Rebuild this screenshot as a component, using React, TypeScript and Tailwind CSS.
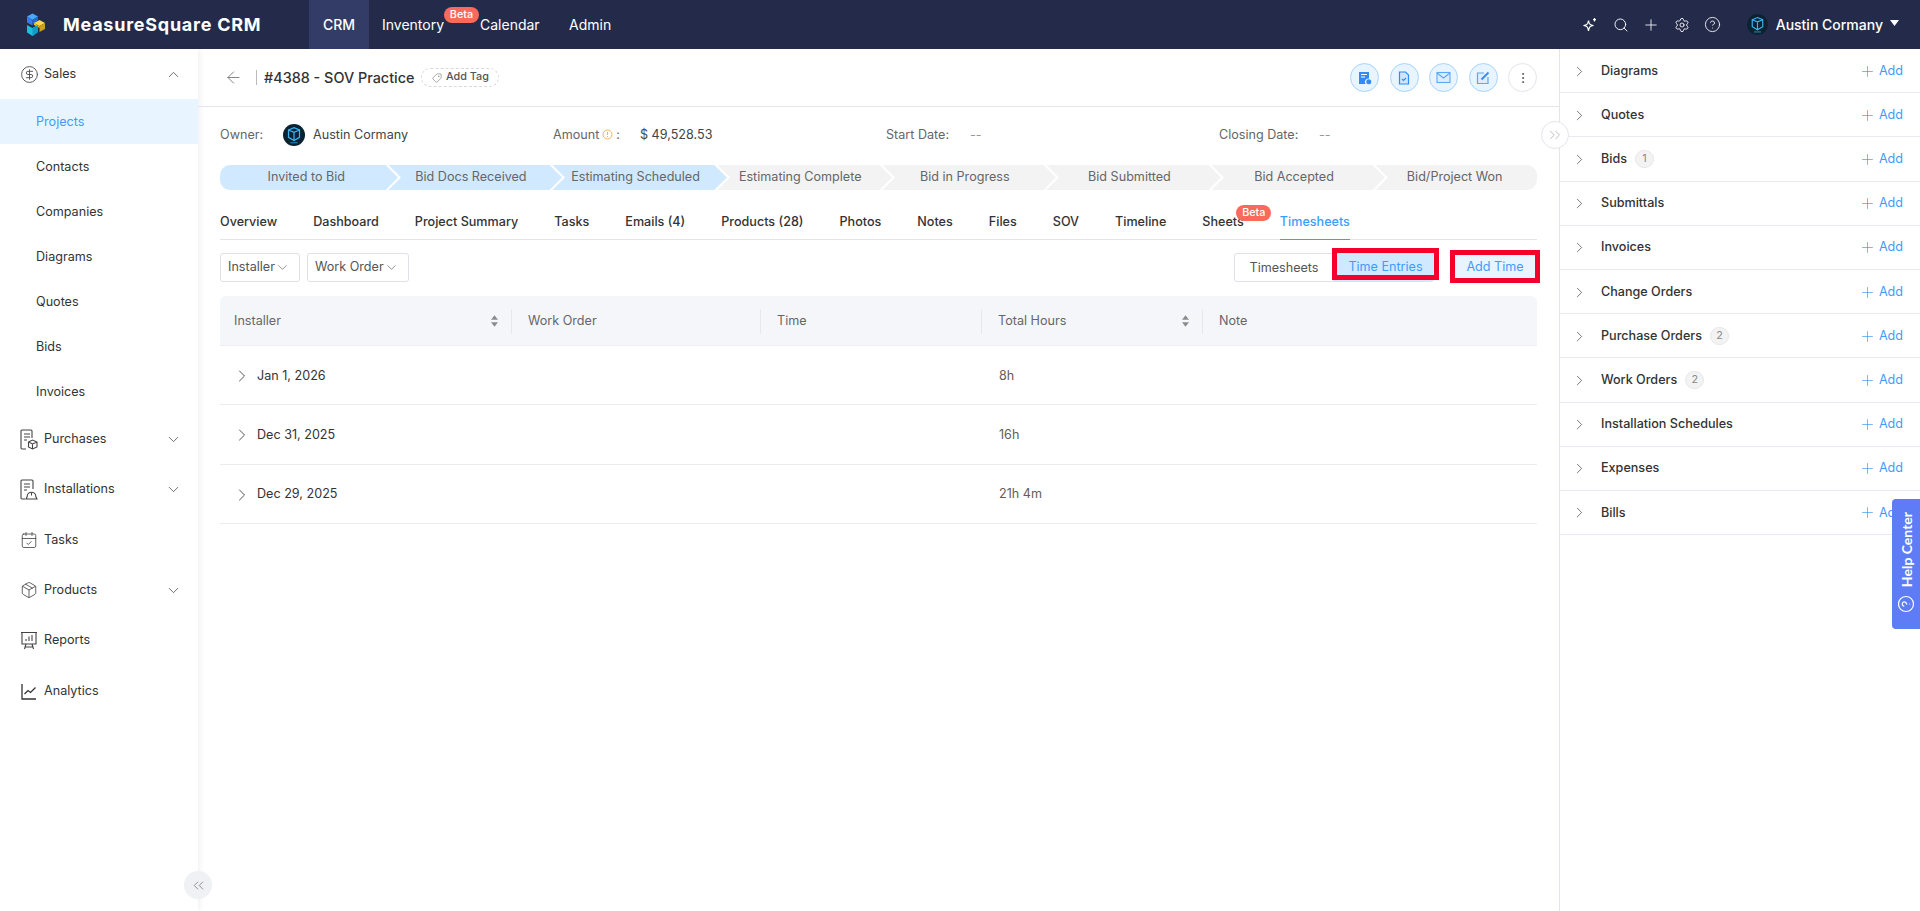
import {
  ArrowLeft,
  CalendarCheck,
  ChevronDown,
  ChevronRight,
  ChevronUp,
  ChevronsLeft,
  ChevronsRight,
  CircleDollarSign,
  CircleHelp,
  EllipsisVertical,
  Package,
  Plus,
  Search,
  Settings,
  Tag,
} from "lucide-react";

const subItems = ["Projects", "Contacts", "Companies", "Diagrams", "Quotes", "Bids", "Invoices"];
const stages = [
  "Invited to Bid",
  "Bid Docs Received",
  "Estimating Scheduled",
  "Estimating Complete",
  "Bid in Progress",
  "Bid Submitted",
  "Bid Accepted",
  "Bid/Project Won",
];
const tabs = [
  "Overview",
  "Dashboard",
  "Project Summary",
  "Tasks",
  "Emails (4)",
  "Products (28)",
  "Photos",
  "Notes",
  "Files",
  "SOV",
  "Timeline",
  "Sheets",
  "Timesheets",
];
const rows = [
  { date: "Jan 1, 2026", hours: "8h" },
  { date: "Dec 31, 2025", hours: "16h" },
  { date: "Dec 29, 2025", hours: "21h 4m" },
];
const panels: { name: string; count?: number }[] = [
  { name: "Diagrams" },
  { name: "Quotes" },
  { name: "Bids", count: 1 },
  { name: "Submittals" },
  { name: "Invoices" },
  { name: "Change Orders" },
  { name: "Purchase Orders", count: 2 },
  { name: "Work Orders", count: 2 },
  { name: "Installation Schedules" },
  { name: "Expenses" },
  { name: "Bills" },
];

function Logo() {
  return (
    <svg width="20" height="26" viewBox="0 0 20 26">
      <path d="M1 4.500 6.500 1.500 12 4.500 6.500 8Z" fill="#4aa8ff" />
      <path d="M1 4.500 6.500 8V13.500L1 10.500Z" fill="#2f7df0" />
      <path d="M6.500 8 12 4.500V8L6.500 13.500Z" fill="#2468d8" />
      <path d="M8 11 13.500 8 19 11 13.500 14Z" fill="#ffd94a" />
      <path d="M13.500 14 19 11V17L13.500 20Z" fill="#c9a020" />
      <path d="M8 11 13.500 14V16L8 13Z" fill="#f2bf1c" />
      <path d="M1 13 6.500 16 12 13V20L6.500 24 1 20.500Z" fill="#1bbde0" />
      <path d="M6.500 16 12 13V20L6.500 24Z" fill="#0f9cc4" />
    </svg>
  );
}

function Avatar({ size }: { size: number }) {
  return (
    <svg width={size} height={size} viewBox="0 0 24 24" className="shrink-0">
      <circle cx="12" cy="12" r="12" fill="#0b2233" />
      <path d="M6 6.500 12 4l6 2.500v8L12 18l-6-3.500Z" fill="none" stroke="#38b6f5" strokeWidth="1.3" />
      <path d="M6 6.500 12 9l6-2.500M12 9v9" fill="none" stroke="#38b6f5" strokeWidth="1.3" />
      <path d="M8 20.500h8" stroke="#38b6f5" strokeWidth="0.8" />
    </svg>
  );
}

function BetaBadge({ className }: { className: string }) {
  return (
    <span
      className={`absolute flex h-[16px] w-[35px] items-center justify-center rounded-full bg-[#f9695c] text-[10.800px] font-medium text-white ${className}`}
    >
      Beta
    </span>
  );
}

function PurchasesIcon() {
  return (
    <svg width="18" height="21" viewBox="0 0 18 21" fill="none" stroke="#444" strokeWidth="1.100">
      <path d="M6 20H2a1 1 0 0 1-1-1V2a1 1 0 0 1 1-1h9a1 1 0 0 1 1 1v7" />
      <path d="M4 5h6M4 8h6M4 11h3" />
      <path d="M8.500 13 12.500 11l4.500 2v5l-4.500 2-4-2ZM8.500 13l4 2 4.500-2M12.500 15v5" />
    </svg>
  );
}

function InstallationsIcon() {
  return (
    <svg width="18" height="21" viewBox="0 0 18 21" fill="none" stroke="#444" strokeWidth="1.100">
      <path d="M5 20H2a1 1 0 0 1-1-1V2a1 1 0 0 1 1-1h10a1 1 0 0 1 1 1v8" />
      <path d="M4 5h6M4 8h6M4 11h3" />
      <path d="M6 20h11l-1.200-2.500a4.300 4.300 0 0 0-8.600 0Z" />
      <path d="M11.500 13.500v3" />
    </svg>
  );
}

function ReportsIcon() {
  return (
    <svg width="18" height="20" viewBox="0 0 18 20" fill="none" stroke="#444" strokeWidth="1.100">
      <path d="M1 1.500h16M2 1.500v11.500h14V1.500" />
      <path d="M6 10V8M9 10V5.500M12 10V4" />
      <path d="M6 13l-1.500 5M12 13l1.500 5M4.500 16h9" />
    </svg>
  );
}

function AnalyticsIcon() {
  return (
    <svg width="16" height="17" viewBox="0 0 16 17" fill="none" stroke="#333" strokeWidth="1.300">
      <path d="M1 1v15h14" />
      <path d="m3.500 11 3.500-3.500 2.500 2L14.500 4.500" />
    </svg>
  );
}

function ActionButton({ children }: { children: React.ReactNode }) {
  return (
    <button className="flex h-[29px] w-[29px] items-center justify-center rounded-full border border-[#a6d4fb] bg-[#e8f4ff]">
      {children}
    </button>
  );
}

function SortIcon() {
  return (
    <svg width="7" height="12" viewBox="0 0 8 13" fill="#8c8c8c">
      <path d="M4 0 8 5H0Z" />
      <path d="M4 13 0 8h8Z" />
    </svg>
  );
}

function Header() {
  const iconBox = "flex w-[30.500px] justify-center";
  return (
    <header className="flex h-[49px] shrink-0 items-center bg-[#242b4a] text-white">
      <div className="ml-[26px] flex w-[283px] items-center">
        <Logo />
        <span className="ml-[17px] text-[18px] font-bold tracking-[0.75px]">MeasureSquare CRM</span>
      </div>
      <nav className="flex h-full items-center text-[14px]">
        <span className="flex h-full w-[60px] items-center justify-center bg-[#323c66] font-medium">CRM</span>
        <span className="relative ml-[13px] w-[98px]">
          Inventory
          <BetaBadge className="left-[62px] top-[-7px]" />
        </span>
        <span className="w-[89px]">Calendar</span>
        <span>Admin</span>
      </nav>
      <div className="ml-auto flex items-center pr-[21px]">
        <span className={iconBox}>
          <svg width="16" height="16" viewBox="0 0 16 16" fill="none" stroke="white" strokeWidth="1.200">
            <path d="M6.500 3.500C7 7 8 8 11.500 8.500 8 9 7 10 6.500 14 6 10 5 9 1.500 8.500 5 8 6 7 6.500 3.500Z" />
            <path d="M12.500 1v3.500M11 2.700h3" />
          </svg>
        </span>
        <span className={iconBox}>
          <Search size={16} strokeWidth={1.4} />
        </span>
        <span className={iconBox}>
          <Plus size={18} strokeWidth={1.1} />
        </span>
        <span className={iconBox}>
          <Settings size={16} strokeWidth={1.3} />
        </span>
        <span className={iconBox}>
          <CircleHelp size={17} strokeWidth={1.2} />
        </span>
        <span className="ml-[19px]">
          <Avatar size={21} />
        </span>
        <span className="ml-[8px] text-[14px] font-medium">Austin Cormany</span>
        <svg width="9" height="6" viewBox="0 0 9 6" fill="white" className="mb-[3px] ml-[7px]">
          <path d="M0 0h9L4.500 6Z" />
        </svg>
      </div>
    </header>
  );
}

function NavRow({ icon, label, arrow }: { icon: React.ReactNode; label: string; arrow?: boolean }) {
  return (
    <div className="flex h-[50.400px] items-center pl-[20px] pr-[16px]">
      <span className="flex w-[18px] justify-center">{icon}</span>
      <span className="ml-[6px] flex-1">{label}</span>
      {arrow && <ChevronDown size={17} strokeWidth={1} />}
    </div>
  );
}

function Sidebar() {
  return (
    <aside className="relative flex w-[198px] shrink-0 flex-col text-[12.600px] text-[#333] shadow-[2px_0_6px_rgba(0,0,0,0.06)]">
      <div className="flex h-[50px] items-center pl-[20px] pr-[16px]">
        <CircleDollarSign size={19} strokeWidth={1.1} className="text-[#444]" />
        <span className="ml-[5px] flex-1">Sales</span>
        <ChevronUp size={17} strokeWidth={1} />
      </div>
      {subItems.map((item, i) => (
        <div
          key={item}
          className={`flex h-[45px] items-center pl-[36px] pt-[1px] ${i === 0 ? "bg-[#e8f4ff] text-[#3f9cff]" : ""}`}
        >
          {item}
        </div>
      ))}
      <NavRow icon={<PurchasesIcon />} label="Purchases" arrow />
      <NavRow icon={<InstallationsIcon />} label="Installations" arrow />
      <NavRow icon={<CalendarCheck size={20} strokeWidth={1.1} className="text-[#444]" />} label="Tasks" />
      <NavRow icon={<Package size={20} strokeWidth={1.1} className="text-[#444]" />} label="Products" arrow />
      <NavRow icon={<ReportsIcon />} label="Reports" />
      <NavRow icon={<AnalyticsIcon />} label="Analytics" />
      <button className="absolute bottom-[12px] right-[-14px] z-20 flex h-[28px] w-[28px] items-center justify-center rounded-full bg-[#eff1f5] text-[#666]">
        <ChevronsLeft size={17} strokeWidth={1} />
      </button>
    </aside>
  );
}

function Stages() {
  return (
    <div className="mt-[19px] flex h-[25px] overflow-hidden rounded-[10px] text-[12.600px] text-[#666]">
      {stages.map((stage, i) => {
        const done = i < 3;
        const last = i === stages.length - 1;
        return (
          <div
            key={stage}
            className={`relative flex w-[164.625px] shrink-0 items-center justify-center ${last ? "" : "pl-[8px]"} ${done ? "bg-[#d1e9ff]" : "bg-[#f3f3f3]"}`}
          >
            {stage}
            {!last && (
              <svg width="17" height="25" viewBox="0 0 17 25" className="absolute left-full top-0 z-10">
                <path d="M0 0 13 12.500 0 25Z" fill={done ? "#d1e9ff" : "#f3f3f3"} />
                <path d="M1 -1 14.500 12.500 1 26" fill="none" stroke="white" strokeWidth="2" />
              </svg>
            )}
          </div>
        );
      })}
    </div>
  );
}

function TimeTable() {
  return (
    <div className="mt-[14px] text-[12.600px]">
      <div className="flex h-[50px] items-center rounded-t-[6px] border-b border-[#eceef2] bg-[#f5f6fa] pt-[1px] text-[#666]">
        <div className="flex h-[25px] w-[292px] items-center justify-between border-r border-[#e6e8ee] pl-[14px] pr-[13px]">
          Installer
          <SortIcon />
        </div>
        <div className="flex h-[25px] w-[249px] items-center border-r border-[#e6e8ee] pl-[16px]">Work Order</div>
        <div className="flex h-[25px] w-[221px] items-center border-r border-[#e6e8ee] pl-[16px]">Time</div>
        <div className="flex h-[25px] w-[221px] items-center justify-between border-r border-[#e6e8ee] pl-[16px] pr-[13px]">
          Total Hours
          <SortIcon />
        </div>
        <div className="pl-[16px]">Note</div>
      </div>
      {rows.map((row) => (
        <div key={row.date} className="flex h-[59.300px] items-center border-b border-[#ececec] pt-[2px] text-[#333]">
          <div className="flex w-[761px] items-center pl-[12px]">
            <ChevronRight size={20} strokeWidth={1} />
            <span className="ml-[5px]">{row.date}</span>
          </div>
          <div className="pl-[18px] text-[#665c54]">{row.hours}</div>
        </div>
      ))}
    </div>
  );
}

function Main() {
  return (
    <main className="relative flex min-w-0 flex-1 flex-col">
      <div className="flex h-[58px] shrink-0 items-center border-b border-[#e4e4ec] pl-[26px] pr-[22px]">
        <ArrowLeft size={19} strokeWidth={1} className="text-[#666]" />
        <span className="ml-[13px] h-[15px] w-px bg-[#bbb]" />
        <span className="ml-[7px] text-[14.400px] font-medium text-[#333]">#4388 - SOV Practice</span>
        <span className="ml-[7px] flex h-[19px] w-[78px] items-center justify-center gap-[4px] rounded-full border border-dashed border-[#d9d9d9] text-[10.800px] font-medium text-[#555]">
          <Tag size={10} strokeWidth={1.2} className="rotate-90" />
          Add Tag
        </span>
        <div className="ml-auto flex items-center gap-[10.500px]">
          <ActionButton>
            <svg width="14" height="14" viewBox="0 0 14 14" fill="#2f8cf5">
              <path d="M1 1h10v6.500a3.500 3.500 0 0 0-3.500 5.500H1Z" />
              <circle cx="10.800" cy="10.800" r="2.500" />
              <path d="M3 3.500h6M3 6h4" stroke="white" strokeWidth="1" />
            </svg>
          </ActionButton>
          <ActionButton>
            <svg width="14" height="14" viewBox="0 0 14 14" fill="none" stroke="#2f8cf5" strokeWidth="1.200">
              <path d="M2.500 1h6l3 3v9h-9Z" fill="#cfe6fc" />
              <path d="m5 8 1.500 1.500L9 7" />
            </svg>
          </ActionButton>
          <ActionButton>
            <svg width="15" height="13" viewBox="0 0 15 13" fill="none" stroke="#5aa9f5" strokeWidth="1.100">
              <rect x="1" y="1.500" width="13" height="10" fill="#dcedfd" />
              <path d="m1 2 6.500 5L14 2" />
            </svg>
          </ActionButton>
          <ActionButton>
            <svg width="14" height="14" viewBox="0 0 14 14" fill="none" stroke="#5aa9f5" strokeWidth="1.200">
              <path d="M8 2H1.500v10.500H12V6" fill="#dcedfd" />
              <path d="M5.500 8.500 12.500 1.500" strokeWidth="1.800" stroke="#2f8cf5" />
            </svg>
          </ActionButton>
          <button className="flex h-[29px] w-[29px] items-center justify-center rounded-full border border-[#e4e4ec] text-[#555]">
            <EllipsisVertical size={14} strokeWidth={1.6} />
          </button>
        </div>
      </div>

      <div className="flex flex-1 flex-col px-[22px]">
        <div className="mt-[17px] grid h-[22px] grid-cols-4 gap-x-[15px] text-[12.600px] text-[#666]">
          <div className="flex items-center">
            <span className="w-[63px]">Owner:</span>
            <Avatar size={22} />
            <span className="ml-[8px] text-[#444]">Austin Cormany</span>
          </div>
          <div className="flex items-center">
            <span className="flex w-[87px] items-center">
              Amount
              <svg width="11" height="11" viewBox="0 0 11 11" fill="none" stroke="#f5b461" strokeWidth="1" className="ml-[3px]">
                <circle cx="5.500" cy="5.500" r="4.500" />
                <path d="M5.500 3v3M5.500 7v1" />
              </svg>
              <span className="ml-[3px]">:</span>
            </span>
            <span className="text-[#444]">$ 49,528.53</span>
          </div>
          <div className="flex items-center">
            <span className="w-[84px]">Start Date:</span>
            <span className="text-[#999]">--</span>
          </div>
          <div className="flex items-center">
            <span className="w-[100px]">Closing Date:</span>
            <span className="text-[#999]">--</span>
          </div>
        </div>

        <Stages />

        <div className="mt-[16px] flex h-[34px] gap-[36px] border-b border-[#e4e4ec] text-[12.600px] font-[450] text-[#333]">
          {tabs.map((tab) => (
            <div
              key={tab}
              className={`relative -mb-px flex items-center pb-[1px] ${tab === "Timesheets" ? "border-b border-[#3f9cff] text-[#3f9cff]" : ""}`}
            >
              {tab}
              {tab === "Sheets" && <BetaBadge className="left-[34px] top-[-1px]" />}
            </div>
          ))}
        </div>

        <div className="mt-[13px] flex h-[29px] items-start text-[12.600px] text-[#555]">
          <button className="flex h-[29px] w-[80px] items-center justify-between rounded-[3px] border border-[#dfe1e8] pl-[7px] pr-[9px]">
            Installer
            <ChevronDown size={15} strokeWidth={1} />
          </button>
          <button className="ml-[7px] flex h-[29px] w-[102px] items-center justify-between rounded-[3px] border border-[#dfe1e8] pl-[7px] pr-[9px]">
            Work Order
            <ChevronDown size={15} strokeWidth={1} />
          </button>
          <div className="relative ml-auto flex h-[29px] w-[200px] rounded-[3px] border border-[#dfe1e8] text-[#555]">
            <span className="flex w-[98px] items-center justify-center pt-[1px]">Timesheets</span>
            <span className="flex-1 bg-[#d1e9ff]" />
            <span className="absolute left-[97px] top-[-6px] flex h-[32px] w-[107px] items-center justify-center border-[5px] border-[#f5002c] bg-[#d1e9ff] pt-[6px] text-[#3f9cff]">
              Time Entries
            </span>
          </div>
          <button className="-mr-[3px] -mt-[3px] ml-[16px] flex h-[33px] w-[90px] items-center justify-center border-[5px] border-[#f5002c] bg-[#e8f4ff] pt-[1px] text-[#3f9cff]">
            Add Time
          </button>
        </div>

        <TimeTable />
      </div>

      <button className="absolute right-[-10px] top-[72px] z-20 flex h-[28px] w-[28px] items-center justify-center rounded-full border border-[#e4e4ec] bg-white text-[#aaa]">
        <ChevronsRight size={18} strokeWidth={1} />
      </button>
    </main>
  );
}

function RightPanel() {
  return (
    <aside className="relative flex w-[361px] shrink-0 flex-col border-l border-[#e4e4ec] text-[12.600px] text-[#333]">
      {panels.map((panel) => (
        <div key={panel.name} className="flex h-[44.200px] items-center border-b border-[#eaeaf2] pl-[11px] pr-[17px] pt-[1px]">
          <ChevronRight size={17} strokeWidth={1} className="text-[#444]" />
          <span className="ml-[13px] font-[450]">{panel.name}</span>
          {panel.count !== undefined && (
            <span className="ml-[8px] flex h-[18px] min-w-[19px] items-center justify-center rounded-full border border-[#e8e8e8] bg-[#f3f3f3] px-[5px] text-[10.800px] text-[#888]">
              {panel.count}
            </span>
          )}
          <span className="ml-auto flex items-center gap-[3px] text-[#3f9cff]">
            <Plus size={17} strokeWidth={1} />
            Add
          </span>
        </div>
      ))}
      <div className="absolute right-0 top-[450px] z-20 flex h-[130px] w-[28px] flex-col items-center justify-end rounded-l-[4px] bg-[#5d7cf5] pb-[16px] text-white">
        <span className="mb-[8px] rotate-180 font-['Lato',sans-serif] text-[14px] font-bold [writing-mode:vertical-rl]">Help Center</span>
        <CircleHelp size={18} strokeWidth={1.6} className="-rotate-90" />
      </div>
    </aside>
  );
}

export default function App() {
  return (
    <div className="flex h-[911px] w-[1920px] flex-col overflow-hidden bg-white font-['Inter',sans-serif]">
      <Header />
      <div className="flex min-h-0 flex-1">
        <Sidebar />
        <Main />
        <RightPanel />
      </div>
    </div>
  );
}
